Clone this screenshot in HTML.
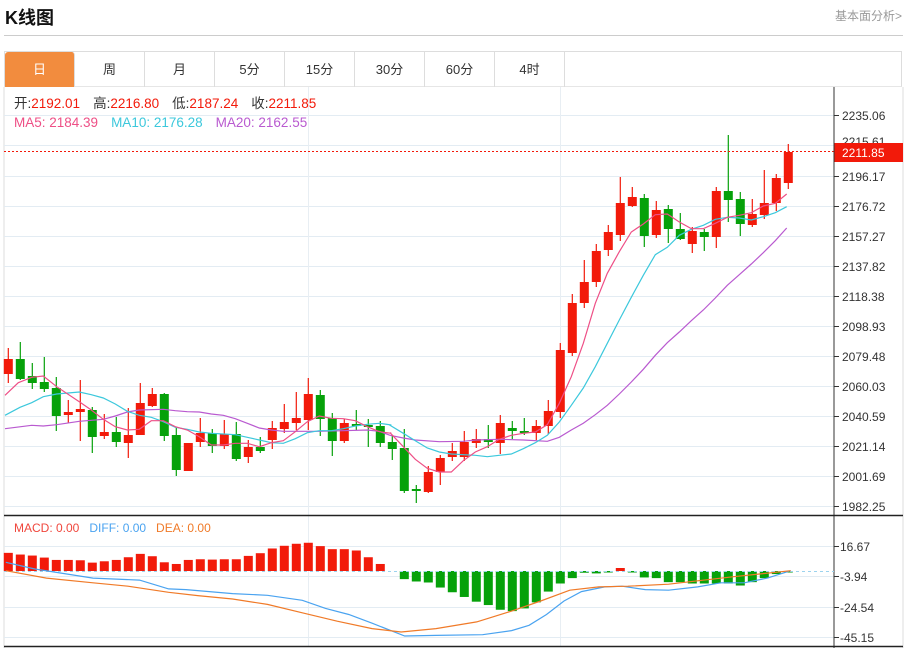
<!DOCTYPE html>
<html><head><meta charset="utf-8"><style>
body{margin:0;width:907px;height:648px;background:#fff;font-family:"Liberation Sans","Noto Sans CJK SC",sans-serif;overflow:hidden;position:relative}
.t{position:absolute;left:5px;top:4px;font-size:18px;font-weight:bold;color:#111}
.r{position:absolute;right:5px;top:7px;font-size:12px;color:#999}
.hr{position:absolute;left:4px;top:35px;width:899px;height:1px;background:#ccc}
.tabs{position:absolute;left:4px;top:51px;width:898px;height:36px;border:1px solid #ddd;border-bottom:1px solid #e6e6e6;box-sizing:border-box}
.tab{position:absolute;top:0;width:70px;height:35px;line-height:35px;text-align:center;font-size:13px;color:#333;border-right:1px solid #ddd;box-sizing:border-box}
.on{background:#f28c3e;color:#fff;border-radius:3px 3px 0 0}
svg{position:absolute;left:0;top:0}
</style></head><body>
<div class="t">K线图</div><div class="r">基本面分析&gt;</div><div class="hr"></div>
<div class="tabs">
<div class="tab on" style="left:0">日</div><div class="tab" style="left:70px">周</div><div class="tab" style="left:140px">月</div><div class="tab" style="left:210px">5分</div><div class="tab" style="left:280px">15分</div><div class="tab" style="left:350px">30分</div><div class="tab" style="left:420px">60分</div><div class="tab" style="left:490px">4时</div>
</div>
<svg id="s" width="907" height="648" font-family="Liberation Sans, Noto Sans CJK SC, sans-serif"></svg>
<script>
var s='';
function L(x1,y1,x2,y2,c,w,d){s+='<line x1="'+x1+'" y1="'+y1+'" x2="'+x2+'" y2="'+y2+'" stroke="'+c+'" stroke-width="'+(w||1)+'"'+(d?' stroke-dasharray="'+d+'"':'')+'/>';}
function T(x,y,t,c,sz){s+='<text x="'+x+'" y="'+y+'" fill="'+c+'" font-size="'+(sz||12)+'">'+t+'</text>';}
L(4,87,4,648,'#ddd');L(903,87,903,648,'#ddd');
var py=[115,145,176,206,236,266,296,326,356,386,416,446,476,506];
py.forEach(function(y){L(4,y+.5,834,y+.5,'#e3ecf3');});
L(308.5,87,308.5,646,'#e8eef3');L(560.5,87,560.5,646,'#e8eef3');
var lab=[[115,'2235.06'],[176,'2196.17'],[206,'2176.72'],[236,'2157.27'],[266,'2137.82'],[296,'2118.38'],[326,'2098.93'],[356,'2079.48'],[386,'2060.03'],[416,'2040.59'],[446,'2021.14'],[476,'2001.69'],[506,'1982.25']];
lab.forEach(function(a){L(834,a[0]+.5,839,a[0]+.5,'#333');T(842,a[0]+5,a[1],'#333');});
T(842,146,'2215.61','#333');
[[546,'16.67'],[576,'-3.94'],[607,'-24.54'],[637,'-45.15']].forEach(function(a){L(4,a[0]+.5,834,a[0]+.5,'#e3ecf3');L(834,a[0]+.5,839,a[0]+.5,'#333');T(840,a[0]+5,a[1],'#333');});
var C=[[1,359,374,348,383],[0,359,379,342,380],[0,376,383,363,389],[0,382,389,357,392],[0,388,416,377,431],[1,412,415,400,423],[1,409,412,380,441],[0,410,437,407,453],[1,432,436,414,439],[0,432,442,417,447],[1,435,443,408,458],[1,403,435,383,435],[1,394,406,388,407],[0,394,436,393,441],[0,435,470,427,476],[1,443,471,443,471],[1,433,442,418,447],[0,433,446,429,453],[1,434,446,420,449],[0,434,459,422,461],[1,447,457,440,463],[0,447,451,437,453],[1,428,440,421,449],[1,422,429,404,433],[1,418,423,392,430],[1,394,420,378,430],[0,395,419,390,436],[0,418,441,413,456],[1,423,441,419,443],[0,424,426,410,430],[0,425,427,419,447],[0,426,443,421,447],[0,442,449,436,460],[0,448,491,429,493],[0,489,491,485,503],[1,472,492,466,493],[1,458,472,455,485],[1,451,457,443,461],[1,442,457,431,461],[1,439,443,429,448],[0,439,442,425,448],[1,423,443,415,454],[0,428,431,421,439],[0,431,433,418,435],[1,426,433,420,440],[1,411,426,400,434],[1,350,412,343,418],[1,303,353,294,356],[1,282,303,260,308],[1,251,282,244,287],[1,232,250,225,256],[1,203,235,177,241],[1,197,206,187,207],[0,198,236,194,247],[1,210,235,201,238],[0,209,229,205,243],[0,229,239,213,240],[1,231,244,227,253],[0,232,237,229,251],[1,191,237,187,248],[0,191,200,135,222],[0,199,224,192,236],[1,214,225,199,227],[1,203,215,170,219],[1,178,203,174,211],[1,152,183,144,189]];
C.forEach(function(c,i){var x=8.3+12*i,col=c[0]?'#f21a0a':'#06a10a';L(x,c[3],x,c[4],col,1.2);s+='<rect x="'+(x-4.5)+'" y="'+c[1]+'" width="9" height="'+Math.max(2,c[2]-c[1])+'" fill="'+col+'"/>';});
function P(a,ox,oy,sx,sy,c){var p=a.map(function(q){return (ox+q[0]/sx).toFixed(1)+','+(oy+q[1]/sy).toFixed(1)}).join(' ');s+='<polyline points="'+p+'" fill="none" stroke="'+c+'" stroke-width="1.2"/>';}
var ma5a=[[15,196],[55,158],[95,142],[130,138],[170,170],[238,215],[274,240],[310,268],[346,290],[382,300],[418,298],[454,272],[490,272],[526,290],[562,300],[598,320],[634,345],[670,345],[706,340],[742,340],[778,350],[814,338],[850,332],[886,305],[922,275],[958,258],[994,265],[1030,266],[1066,272],[1102,290],[1138,305],[1174,310]];
var ma5b=[[0,788],[40,830],[76,868],[112,895],[148,906],[184,906],[220,872],[256,846],[292,830],[328,808],[364,796],[400,790],[436,786],[472,764],[508,700],[544,620],[580,520],[616,400],[652,310],[688,245],[724,186],[760,162],[796,134],[832,132],[868,156],[904,176],[940,176],[976,160],[1012,142],[1048,136],[1084,128],[1120,108],[1156,100],[1190,72]];
var m10a=[[15,256],[60,232],[95,218],[130,200],[170,192],[238,186],[274,194],[310,204],[346,222],[382,244],[418,256],[454,262],[490,275],[526,292],[562,298],[598,306],[634,310],[670,312],[706,314],[742,322],[778,330],[814,338],[850,340],[886,326],[922,308],[958,302],[994,302],[1030,296],[1066,288],[1102,283],[1138,280],[1174,285]];
var m10b=[[0,766],[40,790],[76,812],[112,834],[148,846],[184,852],[220,854],[256,856],[292,860],[328,856],[364,852],[400,836],[436,818],[472,796],[508,756],[544,706],[580,654],[616,590],[652,520],[688,450],[724,382],[760,316],[796,254],[832,232],[868,196],[904,178],[940,166],[976,148],[1012,142],[1048,144],[1084,150],[1120,140],[1156,128],[1190,110]];
var m20a=[[15,296],[95,286],[130,288],[170,284],[238,274],[310,268],[346,258],[382,246],[418,240],[490,238],[526,242],[562,245],[598,246],[634,252],[670,256],[706,266],[742,280],[778,294],[814,300],[850,304],[922,304],[958,304],[1030,302],[1102,300],[1138,304]];
var m20b=[[0,796],[40,804],[76,810],[148,815],[220,814],[256,810],[328,808],[400,810],[472,814],[508,802],[544,780],[580,760],[616,734],[652,706],[688,672],[724,636],[760,598],[796,556],[832,518],[868,486],[904,452],[940,420],[976,384],[1012,346],[1048,314],[1084,282],[1120,248],[1156,212],[1190,174]];
function J(a,b){return a.map(function(q){return[q[0]/3,q[1]/3+330]}).concat(b.map(function(q){return[q[0]/3+390,q[1]/3+170]}));}
P(J(m20a,m20b),0,0,1,1,'#b95ad0');P(J(m10a,m10b),0,0,1,1,'#3cc8dc');P(J(ma5a,ma5b),0,0,1,1,'#ee4f86');
L(4,151.5,834,151.5,'#f21a0a',1,'2,2');
s+='<rect x="834" y="143" width="69" height="19" fill="#f21a0a"/>';T(842,157,'2211.85','#fff');
L(834,87,834,648,'#333');L(4,515.5,903,515.5,'#222',1.5);L(4,646.5,903,646.5,'#222',1.5);
s+='<text x="14" y="108" font-size="13.5"><tspan fill="#333">开:</tspan><tspan fill="#f21a0a">2192.01</tspan><tspan fill="#333" dx="13">高:</tspan><tspan fill="#f21a0a">2216.80</tspan><tspan fill="#333" dx="13">低:</tspan><tspan fill="#f21a0a">2187.24</tspan><tspan fill="#333" dx="13">收:</tspan><tspan fill="#f21a0a">2211.85</tspan></text>';
s+='<text x="14" y="127" font-size="13.5"><tspan fill="#ee4f86">MA5: 2184.39</tspan><tspan fill="#3cc8dc" dx="13">MA10: 2176.28</tspan><tspan fill="#b95ad0" dx="13">MA20: 2162.55</tspan></text>';
s+='<text x="14" y="532" font-size="12"><tspan fill="#f0463c">MACD: 0.00</tspan><tspan fill="#4aa3f0" dx="10">DIFF: 0.00</tspan><tspan fill="#f07a28" dx="10">DEA: 0.00</tspan></text>';
var Z=571;
var red=[157,162,165,171,178,178,179,186,182,178,170,160,167,185,190,178,176,177,176,176,166,158,144,136,130,127,137,146,146,150,170,190];
red.forEach(function(v,i){var y=500+v/2.97;s+='<rect x="'+(8.3+12*i-4.5)+'" y="'+y+'" width="9" height="'+(Z-y)+'" fill="#f21a0a"/>';});
var gr=[235,242,245,260,274,288,302,312,326,330,322,304,272,248,232,216,218,212,0,214,230,232,244,244,248,248,248,248,254,244,232,220,212];
gr.forEach(function(v,i){var x=8.3+12*(33+i);if(i==18){s+='<rect x="'+(x-4.5)+'" y="568" width="9" height="3" fill="#f21a0a"/>';return;}var y=500+v/2.97;s+='<rect x="'+(x-4.5)+'" y="'+Z+'" width="9" height="'+Math.max(1.5,y-Z)+'" fill="#06a10a"/>';});
L(4,Z+.5,834,Z+.5,'#9cd3ee',1,'3,3');
var diff=[[10,185],[60,205],[160,232],[240,238],[290,264],[320,266],[400,278],[460,283],[520,298],[560,322],[600,340],[640,366],[696,404],[750,402],[830,400],[880,388],[910,372],[940,340],[970,300],[1000,272],[1040,258],[1070,256],[1110,266],[1150,268],[1200,258],[1240,246],[1280,246],[1320,232],[1360,210]];
var dea=[[10,210],[80,232],[160,246],[220,256],[290,274],[340,284],[400,294],[460,310],[520,335],[580,360],[640,382],[690,392],[750,382],[820,362],[880,330],[930,300],[980,268],[1030,258],[1080,256],[1150,250],[1200,240],[1260,228],[1360,210]];
P(diff,0,500,1.72,2.97,'#4aa3f0');P(dea,0,500,1.72,2.97,'#f07a28');
document.getElementById('s').innerHTML=s;
</script>
</body></html>
